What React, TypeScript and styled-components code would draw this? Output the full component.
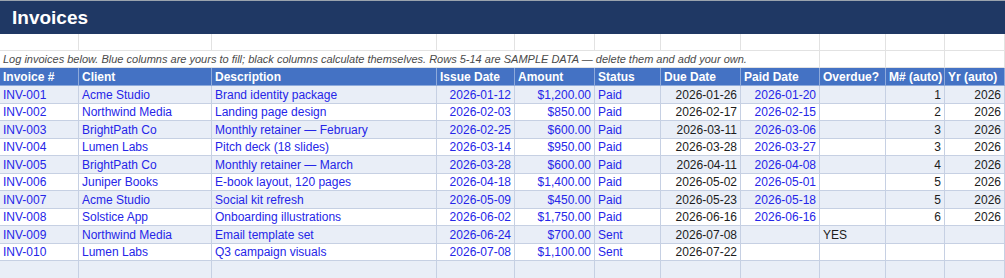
import React from "react"
import styled, { createGlobalStyle } from "styled-components"

const GlobalStyle = createGlobalStyle`
  html, body {
    margin: 0;
    padding: 0;
    background: #fff;
    font-family: "Liberation Sans", Arial, sans-serif;
  }
`

const COLS = "79px 133px 225px 78px 80px 66px 80px 79px 66px 59px 60px"

const Sheet = styled.div`
  width: 1005px;
  height: 278px;
  overflow: hidden;
  background: #fff;
`

const TitleBar = styled.div`
  height: 33px;
  border-top: 1px solid #9aa3ad;
  background: #1f3864;
  color: #fff;
  font-size: 19px;
  font-weight: bold;
  display: flex;
  align-items: center;
  padding-left: 12px;
`

const Row = styled.div<{ $h: number; $bg?: string }>`
  display: grid;
  grid-template-columns: ${COLS};
  height: ${({ $h }) => $h}px;
  background: ${({ $bg }) => $bg || "#fff"};
`

const Cell = styled.div<{ $line?: string; $span?: number }>`
  border-right: 1px solid ${({ $line }) => $line || "#c6d0e3"};
  border-bottom: 1px solid ${({ $line }) => $line || "#c6d0e3"};
  ${({ $span }) => ($span ? `grid-column: span ${$span};` : "")}
  box-sizing: border-box;
  min-width: 0;
`

const Note = styled(Cell)`
  font-size: 11px;
  font-style: italic;
  color: #4a4a4a;
  display: flex;
  align-items: flex-end;
  padding: 0 0 2px 3px;
  white-space: nowrap;
`

const HeadCell = styled(Cell)`
  color: #fff;
  font-size: 12px;
  font-weight: bold;
  display: flex;
  align-items: flex-end;
  padding: 0 3px 1px;
  white-space: nowrap;
  overflow: hidden;
`

const DataCell = styled(Cell)<{ $right?: boolean; $input?: boolean }>`
  font-size: 12px;
  color: ${({ $input }) => ($input ? "#2525e8" : "#1c1c1c")};
  display: flex;
  align-items: flex-end;
  justify-content: ${({ $right }) => ($right ? "flex-end" : "flex-start")};
  padding: 0 3px 1px;
  white-space: nowrap;
  overflow: hidden;
`

type Col = { key: string; label: string; right?: boolean; input?: boolean }

const columns: Col[] = [
  { key: "id", label: "Invoice #", input: true },
  { key: "client", label: "Client", input: true },
  { key: "desc", label: "Description", input: true },
  { key: "issue", label: "Issue Date", right: true, input: true },
  { key: "amount", label: "Amount", right: true, input: true },
  { key: "status", label: "Status", input: true },
  { key: "due", label: "Due Date", right: true },
  { key: "paid", label: "Paid Date", right: true, input: true },
  { key: "overdue", label: "Overdue?" },
  { key: "month", label: "M# (auto)", right: true },
  { key: "year", label: "Yr (auto)", right: true },
]

const rows: Record<string, string>[] = [
  { id: "INV-001", client: "Acme Studio", desc: "Brand identity package", issue: "2026-01-12", amount: "$1,200.00", status: "Paid", due: "2026-01-26", paid: "2026-01-20", overdue: "", month: "1", year: "2026" },
  { id: "INV-002", client: "Northwind Media", desc: "Landing page design", issue: "2026-02-03", amount: "$850.00", status: "Paid", due: "2026-02-17", paid: "2026-02-15", overdue: "", month: "2", year: "2026" },
  { id: "INV-003", client: "BrightPath Co", desc: "Monthly retainer — February", issue: "2026-02-25", amount: "$600.00", status: "Paid", due: "2026-03-11", paid: "2026-03-06", overdue: "", month: "3", year: "2026" },
  { id: "INV-004", client: "Lumen Labs", desc: "Pitch deck (18 slides)", issue: "2026-03-14", amount: "$950.00", status: "Paid", due: "2026-03-28", paid: "2026-03-27", overdue: "", month: "3", year: "2026" },
  { id: "INV-005", client: "BrightPath Co", desc: "Monthly retainer — March", issue: "2026-03-28", amount: "$600.00", status: "Paid", due: "2026-04-11", paid: "2026-04-08", overdue: "", month: "4", year: "2026" },
  { id: "INV-006", client: "Juniper Books", desc: "E-book layout, 120 pages", issue: "2026-04-18", amount: "$1,400.00", status: "Paid", due: "2026-05-02", paid: "2026-05-01", overdue: "", month: "5", year: "2026" },
  { id: "INV-007", client: "Acme Studio", desc: "Social kit refresh", issue: "2026-05-09", amount: "$450.00", status: "Paid", due: "2026-05-23", paid: "2026-05-18", overdue: "", month: "5", year: "2026" },
  { id: "INV-008", client: "Solstice App", desc: "Onboarding illustrations", issue: "2026-06-02", amount: "$1,750.00", status: "Paid", due: "2026-06-16", paid: "2026-06-16", overdue: "", month: "6", year: "2026" },
  { id: "INV-009", client: "Northwind Media", desc: "Email template set", issue: "2026-06-24", amount: "$700.00", status: "Sent", due: "2026-07-08", paid: "", overdue: "YES", month: "", year: "" },
  { id: "INV-010", client: "Lumen Labs", desc: "Q3 campaign visuals", issue: "2026-07-08", amount: "$1,100.00", status: "Sent", due: "2026-07-22", paid: "", overdue: "", month: "", year: "" },
]

const STRIPE = "#e9eef7"

export default function App() {
  return (
    <>
      <GlobalStyle />
      <Sheet>
        <TitleBar>Invoices</TitleBar>

        <Row $h={17}>
          {columns.map((c) => (
            <Cell key={c.key} $line="#e2e2e2" />
          ))}
        </Row>

        <Row $h={17}>
          <Note $span={8} $line="#e2e2e2">
            Log invoices below. Blue columns are yours to fill; black columns calculate themselves. Rows 5-14 are SAMPLE DATA — delete them and add your own.
          </Note>
          <Cell $line="#e2e2e2" />
          <Cell $line="#e2e2e2" />
          <Cell $line="#e2e2e2" />
        </Row>

        <Row $h={18} $bg="#4472c4">
          {columns.map((c) => (
            <HeadCell key={c.key} $line="#8eaadb">{c.label}</HeadCell>
          ))}
        </Row>

        {rows.map((r, i) => (
          <Row key={r.id} $h={17.5} $bg={i % 2 === 0 ? STRIPE : "#fff"}>
            {columns.map((c) => (
              <DataCell key={c.key} $right={c.right} $input={c.input}>
                {r[c.key]}
              </DataCell>
            ))}
          </Row>
        ))}

        <Row $h={17.5} $bg={STRIPE}>
          {columns.map((c) => (
            <DataCell key={c.key} />
          ))}
        </Row>
      </Sheet>
    </>
  )
}
